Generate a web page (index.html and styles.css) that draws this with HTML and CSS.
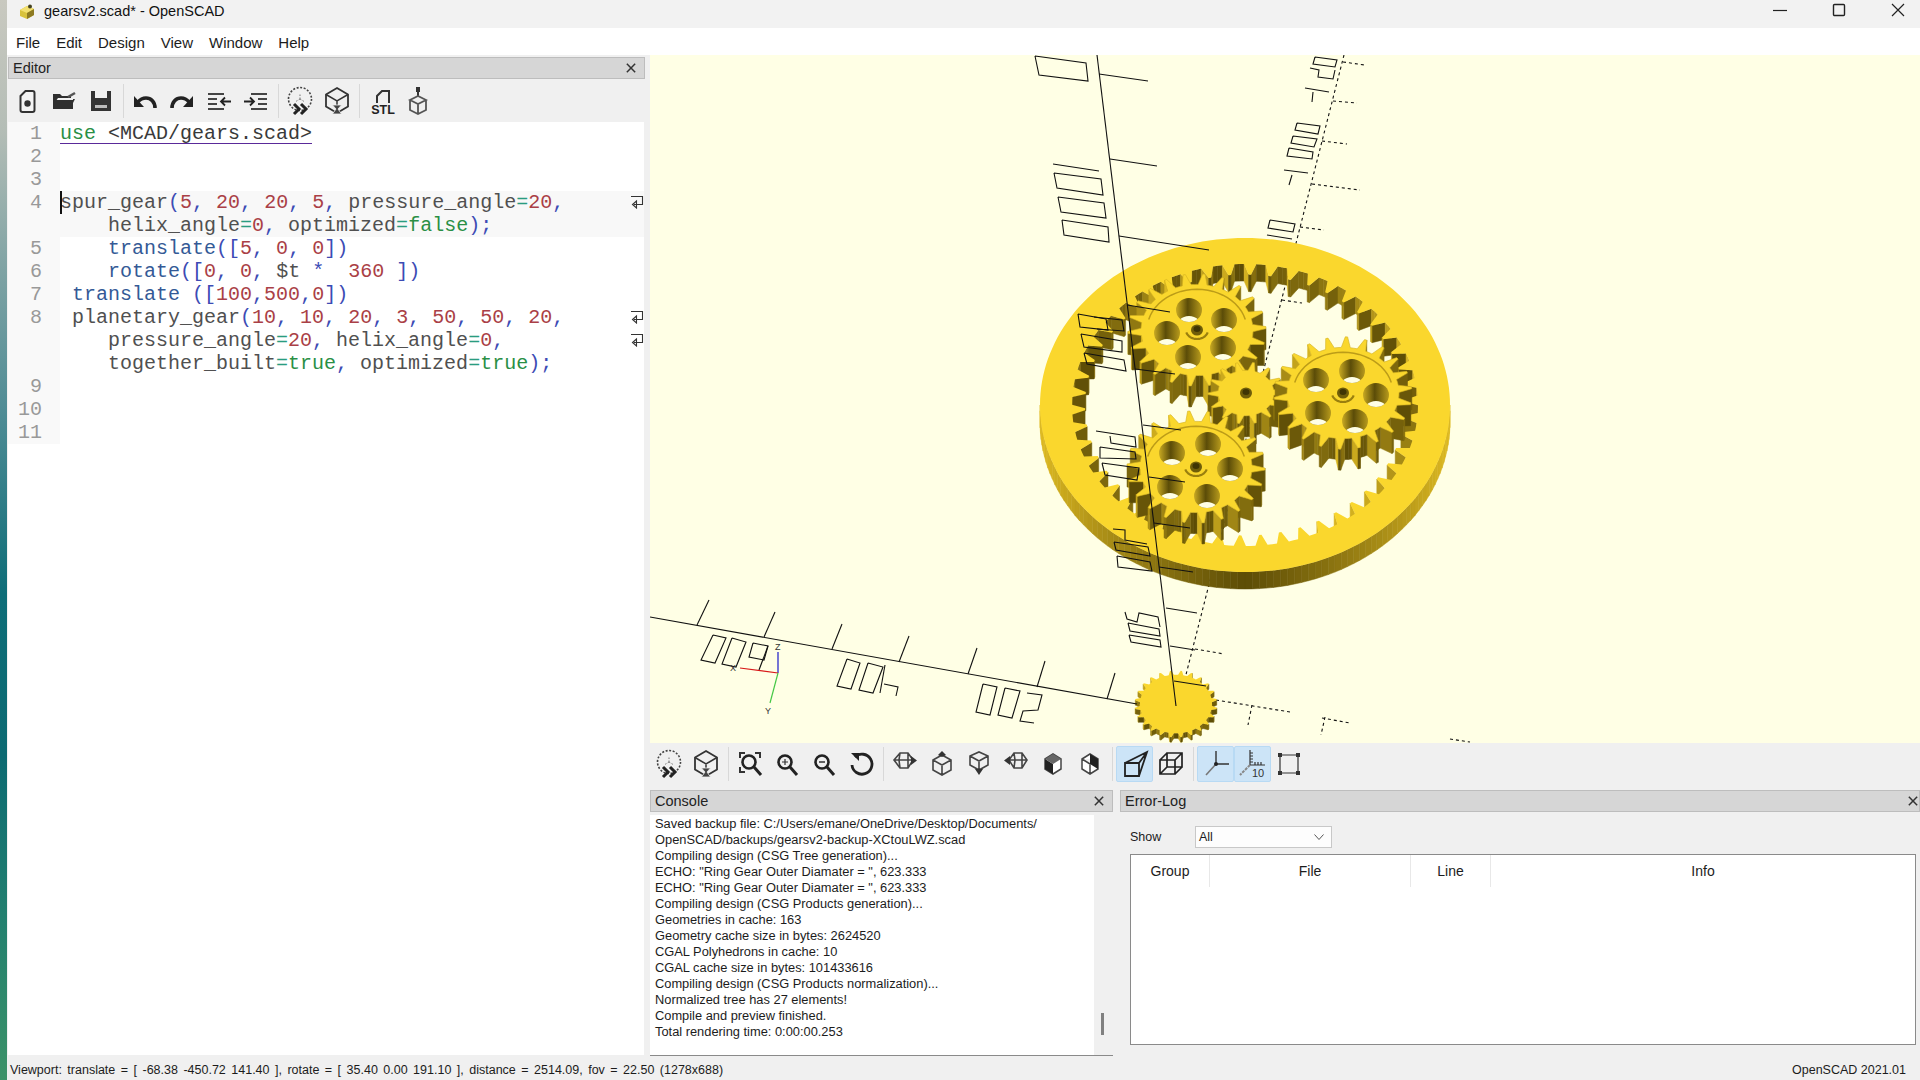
FILE: index.html
```html
<!DOCTYPE html>
<html lang="en">
<head>
<meta charset="utf-8">
<title>gearsv2.scad* - OpenSCAD</title>
<link rel="stylesheet" href="styles.css">
</head>
<body>
<svg class="defs" width="0" height="0" aria-hidden="true">
  <defs>
    <symbol id="i-preview" viewBox="0 0 32 32">
      <circle cx="16" cy="14" r="11.5" fill="none" stroke="#444" stroke-width="1.6" stroke-dasharray="2 1.6"/>
      <path d="M16 14v-5M16 14l-5 3M16 14l5 3" stroke="#777" stroke-width="1" stroke-dasharray="1.5 1.5" fill="none"/>
      <path d="M9 20l5 5-5 5M16 20l5 5-5 5" transform="translate(1 -1)" fill="none" stroke="#222" stroke-width="3"/>
    </symbol>
    <symbol id="i-render" viewBox="0 0 32 32">
      <path d="M16 3l11 6.5v12L16 28 5 21.5v-12z" fill="none" stroke="#333" stroke-width="1.8"/>
      <path d="M5 9.5L16 16l11-6.5M16 16v4" fill="none" stroke="#333" stroke-width="1.5"/>
      <path d="M11.500 20h9l-3.500 4 3.500 5h-9l3.500-5z" fill="#444" stroke="#f0f0f0" stroke-width=".8"/>
    </symbol>
    <symbol id="i-win" viewBox="0 0 12 12"><path d="M1 1l10 10M11 1L1 11" fill="none" stroke="#333" stroke-width="1.800"/></symbol>
    <symbol id="i-wrap" viewBox="0 0 14 14">
      <path d="M1 1.500h11.500v8H4M6.500 6L2.500 9.500l4 3.500V6z" fill="none" stroke="#333" stroke-width="1.100"/>
    </symbol>
  </defs>
</svg>
<div class="desktop-strip"></div>
<div class="window">
  <header class="titlebar">
    <svg class="app-icon" width="18" height="16" viewBox="0 0 18 16"><path d="M2 6l7-4 7 3v6l-7 4-7-3z" fill="#d8c23c"/><path d="M9 2l7 3-7 4-7-3z" fill="#f2e070"/><path d="M9 9l7-4v6l-7 4z" fill="#8d7a22"/><circle cx="12" cy="2.500" r="2" fill="#45421f"/></svg>
    <span class="title-text">gearsv2.scad* - OpenSCAD</span>
    <div class="win-buttons">
      <span class="win-btn"><svg width="14" height="14" viewBox="0 0 14 14"><path d="M0 7.500h14" stroke="#222" stroke-width="1.200"/></svg></span>
      <span class="win-btn"><svg width="14" height="14" viewBox="0 0 14 14"><rect x="1.500" y="1.500" width="11" height="11" rx="1" fill="none" stroke="#222" stroke-width="1.400"/></svg></span>
      <span class="win-btn"><svg width="14" height="14" viewBox="0 0 14 14"><path d="M1 1l12 12M13 1L1 13" stroke="#222" stroke-width="1.200"/></svg></span>
    </div>
  </header>
  <nav class="menubar">
    <span>File</span><span>Edit</span><span>Design</span><span>View</span><span>Window</span><span>Help</span>
  </nav>
  <main class="main">
    <section class="editor-dock">
      <div class="dock-head"><span>Editor</span><svg class="dock-close"><use href="#i-win"/></svg></div>
      <div class="toolbar editor-tools">
        <span class="tb"><svg width="32" height="32" viewBox="0 0 32 32"><path d="M9.500 11l5-5h7q2 0 2 2v17q0 2-2 2h-10q-2 0-2-2z" fill="#f4f4f4" stroke="#333" stroke-width="2"/><circle cx="16.500" cy="18.500" r="3.200" fill="#333"/></svg></span>
        <span class="tb"><svg width="32" height="32" viewBox="0 0 32 32"><path d="M5 9h7l2 2h9v2H10l-5 7zM5 15h20v9H5z" fill="#2f2f2f"/><path d="M20 12l7-4" stroke="#555" stroke-width="2.500"/><path d="M25 14v4l2-4z" fill="#333"/></svg></span>
        <span class="tb"><svg width="32" height="32" viewBox="0 0 32 32"><path d="M6 6h4v7h12V6h4v20H6z" fill="#333"/><path d="M10 20h12v3H10z" fill="#bbb"/></svg></span>
        <i class="sep"></i>
        <span class="tb"><svg width="32" height="32" viewBox="0 0 32 32"><path d="M26 23c0-6-4-10-9-10-3 0-6 1.500-8 4" fill="none" stroke="#222" stroke-width="3.600"/><path d="M5 11v11h10z" fill="#222"/></svg></span>
        <span class="tb"><svg width="32" height="32" viewBox="0 0 32 32"><path d="M6 23c0-6 4-10 9-10 3 0 6 1.500 8 4" fill="none" stroke="#222" stroke-width="3.600"/><path d="M27 11v11H17z" fill="#222"/></svg></span>
        <span class="tb"><svg width="32" height="32" viewBox="0 0 32 32"><path d="M5 9h16M5 14h9M5 19h9M5 24h16" stroke="#444" stroke-width="1.800"/><path d="M28 16.500H18M22 12.500l-4 4 4 4" fill="none" stroke="#222" stroke-width="1.800"/></svg></span>
        <span class="tb"><svg width="32" height="32" viewBox="0 0 32 32"><path d="M11 9h16M18 14h9M18 19h9M11 24h16" stroke="#444" stroke-width="1.800"/><path d="M4 16.500h10M10 12.500l4 4-4 4" fill="none" stroke="#222" stroke-width="1.800"/></svg></span>
        <i class="sep"></i>
        <span class="tb"><svg width="32" height="32"><use href="#i-preview"/></svg></span>
        <span class="tb"><svg width="32" height="32"><use href="#i-render"/></svg></span>
        <i class="sep"></i>
        <span class="tb"><svg class="nudge" width="32" height="32" viewBox="0 0 32 32"><path d="M10 18v-7l5-5h7v12" fill="none" stroke="#333" stroke-width="2"/><text class="stl" x="16" y="29">STL</text></svg></span>
        <span class="tb"><svg width="32" height="32" viewBox="0 0 32 32"><path d="M14 2h4v5h-1v5h-2V7h-1z" fill="#333"/><path d="M8 15l8 4 8-4-8-4zM8 15v10l8 4 8-4V15M16 19v10" fill="none" stroke="#555" stroke-width="1.800"/></svg></span>
      </div>
      <div class="code-area">
        <div class="row"><span class="ln">1</span><span class="code"><span class="incl"><span class="kw">use</span> &lt;MCAD/gears.scad&gt;</span></span></div>
        <div class="row"><span class="ln">2</span><span class="code"></span></div>
        <div class="row"><span class="ln">3</span><span class="code"></span></div>
        <div class="row"><span class="ln">4</span><span class="code cur"><i class="caret"></i>spur_gear<b>(</b><em>5</em><b>,</b> <em>20</em><b>,</b> <em>20</em><b>,</b> <em>5</em><b>,</b> pressure_angle<u>=</u><em>20</em><b>,</b><svg class="wrap-mark"><use href="#i-wrap"/></svg></span></div>
        <div class="row"><span class="ln"></span><span class="code cur">    helix_angle<u>=</u><em>0</em><b>,</b> optimized<u>=</u><span class="kw">false</span><b>);</b></span></div>
        <div class="row"><span class="ln">5</span><span class="code">    <span class="fn">translate</span><b>([</b><em>5</em><b>,</b> <em>0</em><b>,</b> <em>0</em><b>])</b></span></div>
        <div class="row"><span class="ln">6</span><span class="code">    <span class="fn">rotate</span><b>([</b><em>0</em><b>,</b> <em>0</em><b>,</b> $t <b>*</b>  <em>360</em> <b>])</b></span></div>
        <div class="row"><span class="ln">7</span><span class="code"> <span class="fn">translate</span> <b>([</b><em>100</em><b>,</b><em>500</em><b>,</b><em>0</em><b>])</b></span></div>
        <div class="row"><span class="ln">8</span><span class="code"> planetary_gear<b>(</b><em>10</em><b>,</b> <em>10</em><b>,</b> <em>20</em><b>,</b> <em>3</em><b>,</b> <em>50</em><b>,</b> <em>50</em><b>,</b> <em>20</em><b>,</b><svg class="wrap-mark"><use href="#i-wrap"/></svg></span></div>
        <div class="row"><span class="ln"></span><span class="code">    pressure_angle<u>=</u><em>20</em><b>,</b> helix_angle<u>=</u><em>0</em><b>,</b><svg class="wrap-mark"><use href="#i-wrap"/></svg></span></div>
        <div class="row"><span class="ln"></span><span class="code">    together_built<u>=</u><span class="kw">true</span><b>,</b> optimized<u>=</u><span class="kw">true</span><b>);</b></span></div>
        <div class="row"><span class="ln">9</span><span class="code"></span></div>
        <div class="row"><span class="ln">10</span><span class="code"></span></div>
        <div class="row"><span class="ln">11</span><span class="code"></span></div>
      </div>
    </section>
    <section class="right">
      <div class="viewport">
        <svg id="scene" class="scene" width="1270" height="688" viewBox="650 55 1270 688">
          <defs>
            <linearGradient id="holeFill" x1="0" x2="1" y1="0" y2="0">
              <stop offset="0" stop-color="#c9aa22"/><stop offset=".45" stop-color="#5b4c08"/><stop offset="1" stop-color="#b79a1c"/>
            </linearGradient>
          </defs>
          <g id="back"></g>
          <g id="model"></g>
          <g id="front"></g>
          <g class="gizmo">
            <path d="M778 673V652" stroke="#1a1ac8"/>
            <path d="M778 673L740 668" stroke="#d81818"/>
            <path d="M778 673L770 703" stroke="#46c846"/>
            <text x="775" y="650">Z</text>
            <text x="730" y="671">X</text>
            <text x="765" y="714">Y</text>
          </g>
        </svg>
      </div>
      <div class="toolbar view-tools">
        <span class="tb"><svg width="32" height="32"><use href="#i-preview"/></svg></span>
        <span class="tb"><svg width="32" height="32"><use href="#i-render"/></svg></span>
        <i class="sep"></i>
        <span class="tb"><svg width="32" height="32" viewBox="0 0 32 32"><path d="M6 10V5h5M21 5h5v5M6 19v5h5" fill="none" stroke="#333" stroke-width="2"/><circle cx="15" cy="14" r="6.500" fill="none" stroke="#222" stroke-width="2.600"/><path d="M20 19l7 8" stroke="#222" stroke-width="3"/></svg></span>
        <span class="tb"><svg width="32" height="32" viewBox="0 0 32 32"><circle cx="14" cy="14" r="6.500" fill="none" stroke="#222" stroke-width="2.600"/><path d="M11 14h6M14 11v6" stroke="#333" stroke-width="1.200"/><path d="M19 19l7 8" stroke="#222" stroke-width="3"/></svg></span>
        <span class="tb"><svg width="32" height="32" viewBox="0 0 32 32"><circle cx="14" cy="14" r="6.500" fill="none" stroke="#222" stroke-width="2.600"/><path d="M11 14h6" stroke="#333" stroke-width="1.500"/><path d="M19 19l7 8" stroke="#222" stroke-width="3"/></svg></span>
        <span class="tb"><svg width="32" height="32" viewBox="0 0 32 32"><path d="M10 9a10 10 0 1 1-3 8" fill="none" stroke="#222" stroke-width="2.800"/><path d="M6 5h8v8z" fill="#222"/></svg></span>
        <i class="sep"></i>
        <span class="tb"><svg width="32" height="32" viewBox="0 0 32 32"><path d="M5 12l6-7h8l5 7-5 8h-8l-6-8zM5 12h14l5 0M11 5l-1 7 1 8M19 5v15" fill="none" stroke="#444" stroke-width="1.600"/><path d="M22 8l6 4.500-6 4.500z" fill="#333"/></svg></span>
        <span class="tb"><svg width="32" height="32" viewBox="0 0 32 32"><path d="M7 12l9-5 9 5v10l-9 5-9-5zM7 12l9 5 9-5M16 17v10" fill="none" stroke="#444" stroke-width="1.600"/><path d="M12 7l4-4 4 4-4 2z" fill="#333"/></svg></span>
        <span class="tb"><svg width="32" height="32" viewBox="0 0 32 32"><path d="M7 8l9-4 9 4v9l-9 5-9-5zM7 8l9 5 9-5M16 13v9" fill="none" stroke="#444" stroke-width="1.600"/><path d="M12 21l8 0-4 6z" fill="#333"/></svg></span>
        <span class="tb"><svg width="32" height="32" viewBox="0 0 32 32"><path d="M9 12l5-7h8l5 7-5 8h-8zM9 12h13l5 0M22 5v15M14 5l1 7-1 8" fill="none" stroke="#444" stroke-width="1.600"/><path d="M10 8l-6 4.500 6 4.500z" fill="#333"/></svg></span>
        <span class="tb"><svg width="32" height="32" viewBox="0 0 32 32"><path d="M8 11l8-5 8 5v10l-8 5-8-5z" fill="#fff" stroke="#444" stroke-width="1.500"/><path d="M8 11l8 5v10l-8-5z" fill="#222"/><path d="M8 11l8-5 8 5-8 5z" fill="#666"/></svg></span>
        <span class="tb"><svg width="32" height="32" viewBox="0 0 32 32"><path d="M8 11l8-5 8 5v10l-8 5-8-5zM8 11l8 5 8-5M16 16v10" fill="#fff" stroke="#444" stroke-width="1.500"/><path d="M16 6l8 5v10l-8-5z" fill="#222"/></svg></span>
        <i class="sep"></i>
        <span class="tb active"><svg class="nudge" width="32" height="32" viewBox="0 0 32 32"><path d="M5 15h14v13H5zM5 15L27 4 19 28M19 15L27 4" fill="none" stroke="#222" stroke-width="1.800"/></svg></span>
        <span class="tb"><svg width="32" height="32" viewBox="0 0 32 32"><path d="M5 12h15v14H5zM12 5h15v14H12zM5 12l7-7M20 12l7-7M5 26l7-7M20 26l7-7" fill="none" stroke="#222" stroke-width="1.700"/></svg></span>
        <i class="sep"></i>
        <span class="tb active"><svg class="nudge" width="32" height="32" viewBox="0 0 32 32"><path d="M15 3v13h13" fill="none" stroke="#333" stroke-width="1.400"/><path d="M15 16L5 27" stroke="#777" stroke-width="1.600"/><circle cx="15" cy="16" r="2" fill="#222"/></svg></span>
        <span class="tb active"><svg width="32" height="32" viewBox="0 0 32 32"><path d="M14 2v15h15M14 5h3M14 8h3M14 11h3M14 14h3M19 14v3M22 14v3M25 14v3" fill="none" stroke="#333" stroke-width="1.200"/><path d="M14 17L4 27" stroke="#888" stroke-width="2" stroke-dasharray="3 1"/><text class="ten" x="16" y="29">10</text></svg></span>
        <span class="tb"><svg width="32" height="32" viewBox="0 0 32 32"><path d="M7 7h18v18H7z" fill="none" stroke="#333" stroke-width="1.200"/><path d="M5 5h4v4H5zM23 5h4v4h-4zM5 23h4v4H5zM23 23h4v4h-4z" fill="#333"/></svg></span>
      </div>
      <div class="bottom-docks">
        <section class="console">
          <div class="dock-head"><span>Console</span><svg class="dock-close"><use href="#i-win"/></svg></div>
          <div class="console-body">
            <div class="console-text">
              <p>Saved backup file: C:/Users/emane/OneDrive/Desktop/Documents/</p>
              <p>OpenSCAD/backups/gearsv2-backup-XCtouLWZ.scad</p>
              <p>Compiling design (CSG Tree generation)...</p>
              <p>ECHO: "Ring Gear Outer Diamater = ", 623.333</p>
              <p>ECHO: "Ring Gear Outer Diamater = ", 623.333</p>
              <p>Compiling design (CSG Products generation)...</p>
              <p>Geometries in cache: 163</p>
              <p>Geometry cache size in bytes: 2624520</p>
              <p>CGAL Polyhedrons in cache: 10</p>
              <p>CGAL cache size in bytes: 101433616</p>
              <p>Compiling design (CSG Products normalization)...</p>
              <p>Normalized tree has 27 elements!</p>
              <p>Compile and preview finished.</p>
              <p>Total rendering time: 0:00:00.253</p>
            </div>
            <div class="scrolltrack"><i class="thumb"></i></div>
          </div>
        </section>
        <section class="errorlog">
          <div class="dock-head"><span>Error-Log</span><svg class="dock-close"><use href="#i-win"/></svg></div>
          <div class="filter"><span class="show-label">Show</span><span class="combo">All<svg width="12" height="8" viewBox="0 0 12 8"><path d="M1.500 1.500L6 6.500l4.500-5" fill="none" stroke="#555"/></svg></span></div>
          <div class="log-table">
            <div class="log-head"><span>Group</span><span>File</span><span>Line</span><span>Info</span></div>
          </div>
        </section>
      </div>
    </section>
  </main>
  <footer class="statusbar">
    <span class="status-left">Viewport: translate = [ -68.38 -450.72 141.40 ], rotate = [ 35.40 0.00 191.10 ], distance = 2514.09, fov = 22.50 (1278x688)</span>
    <span>OpenSCAD 2021.01</span>
  </footer>
</div>
<script src="gears.js"></script>
</body>
</html>
```
FILE: styles.css
```css
* { box-sizing: border-box; }
html, body { margin: 0; height: 100%; }
body {
  width: 1920px; height: 1080px; overflow: hidden; display: flex;
  font-family: "Liberation Sans", Arial, sans-serif; font-size: 12px; color: #1c1c1c; background: #f0f0f0;
}
.defs { position: absolute; }
.desktop-strip {
  width: 7px; flex: none;
  background: linear-gradient(180deg, #c9c9c0 0, #b4bdb6 12%, #7fa3a4 25%, #4f8c95 38%, #0e6d78 55%, #0c6a72 70%, #23806f 85%, #3c9268 100%);
}
.window { flex: 1; display: flex; flex-direction: column; min-width: 0; background: #f0f0f0; }

.titlebar { height: 28px; display: flex; align-items: center; background: #f2f2f2; padding-left: 11px; flex: none; }
.app-icon { margin-right: 8px; margin-top: -4px; }
.title-text { font-size: 14.500px; margin-top: -6px; color: #111; }
.win-buttons { margin-left: auto; display: flex; gap: 15px; margin-top: -8px; }
.win-btn { width: 44px; display: flex; justify-content: center; }

.menubar { height: 27px; display: flex; align-items: center; background: #fff; padding: 1px 0 0 9px; gap: 16px; font-size: 15px; flex: none; }

.main { flex: 1; display: flex; min-height: 0; }
.editor-dock { width: 638px; flex: none; display: flex; flex-direction: column; padding: 2px 0 5px 1px; }
.dock-head {
  height: 22px; flex: none; display: flex; align-items: center; justify-content: space-between;
  background: #d6d6d6; border: 1px solid #bdbdbd; padding: 0 8px 0 4px; font-size: 14.500px; color: #222;
}
.errorlog .dock-head { padding-right: 1px; }
.dock-close { width: 10px; height: 10px; }

.toolbar { height: 43px; flex: none; display: flex; align-items: center; background: #f0f0f0; }
.editor-tools { padding-left: 0.500px; }
.tb { width: 37px; height: 36px; display: flex; align-items: center; justify-content: center; border-radius: 2px; flex: none; }
.tb.active { background: #cce4f7; border: 1px solid #b8daf4; }
.nudge { margin-left: 3px; }
.sep { width: 1px; height: 34px; margin: 0 3px; background: #d8d8d8; flex: none; }
.stl { font: 700 12.500px "Liberation Sans", Arial, sans-serif; text-anchor: middle; fill: #222; }
.ten { font: 400 11px "Liberation Sans", Arial, sans-serif; fill: #333; }

.code-area { flex: 1; background: #fff; font: 20px/23px "Liberation Mono", "Courier New", monospace; color: #505050; min-height: 0; width: 636px; }
.row { display: flex; height: 23px; }
.ln { width: 52px; flex: none; background: #f9f9f9; color: #999; padding-right: 18px; text-align: right; }
.code { flex: 1; position: relative; white-space: pre; }
.code.cur { background: #f8f8f8; }
.caret { position: absolute; left: 0; top: 0; width: 2px; height: 23px; background: #111; }
.kw { color: #2a8f45; }
.fn { color: #345a96; }
.code b { font-weight: 400; color: #3c4bb4; }
.code em { font-style: normal; color: #aa3f46; }
.code u { text-decoration: none; color: #2a9c80; }
.incl { color: #3a3a3a; border-bottom: 1px solid #5a2a9a; display: inline-block; height: 21px; line-height: 22px; }
.wrap-mark { position: absolute; right: 0; top: 4px; width: 14px; height: 14px; }

.right { flex: 1; display: flex; flex-direction: column; margin-left: 5px; min-width: 0; }
.viewport { height: 688px; flex: none; background: #ffffe5; overflow: hidden; }
.scene { display: block; }
.gizmo path { stroke-width: 1.200; fill: none; }
.gizmo text { font: 9px "Liberation Sans", Arial, sans-serif; fill: #333; }
.view-tools { height: 42px; padding-left: 0.500px; }

.bottom-docks { flex: 1; display: flex; gap: 7px; padding-top: 5px; min-height: 0; }
.console { width: 463px; flex: none; display: flex; flex-direction: column; padding-bottom: 4px; }
.console-body { flex: 1; display: flex; background: #f0f0f0; border-bottom: 1px solid #8a8a8a; margin-top: 3px; min-height: 0; }
.console-text { width: 444px; flex: none; background: #fff; padding: 1px 0 0 5px; }
.console-text p { margin: 0; height: 16px; line-height: 16px; white-space: nowrap; font-size: 12.850px; }
.scrolltrack { flex: 1; position: relative; }
.thumb { position: absolute; left: 7px; bottom: 20px; width: 3px; height: 22px; background: #808080; }

.errorlog { flex: 1; display: flex; flex-direction: column; min-width: 0; }
.filter { height: 42px; display: flex; align-items: center; padding: 7px 0 0 10px; font-size: 12.500px; flex: none; }
.show-label { width: 65px; }
.combo { width: 137px; height: 22px; background: #fdfdfd; border: 1px solid #c8c8c8; display: flex; align-items: center; justify-content: space-between; padding: 0 6px 0 3px; }
.log-table { height: 191px; margin: 0 4px 0 10px; background: #fff; border: 1px solid #8a8a8a; flex: none; }
.log-head { display: grid; grid-template-columns: 79px 201px 80px 1fr; height: 32px; font-size: 14px; }
.log-head span { display: flex; align-items: center; justify-content: center; border-right: 1px solid #e8e8e8; }
.log-head span:last-child { border-right: 0; }

.statusbar { height: 20px; flex: none; display: flex; justify-content: space-between; align-items: center; padding: 0 14px 0 3px; font-size: 12.500px; background: #f0f0f0; }
.status-left { word-spacing: 2px; }
```
FILE: gears.js
```js
(function () {
  var NS = 'http://www.w3.org/2000/svg';
  var K = 0.815;
  var TOP = '#fad72d';
  var model = document.getElementById('model');

  function el(name, attrs, parent) {
    var e = document.createElementNS(NS, name);
    for (var k in attrs) e.setAttribute(k, attrs[k]);
    (parent || model).appendChild(e);
    return e;
  }
  function d(pts) {
    return 'M' + pts.map(function (p) { return p[0].toFixed(1) + ' ' + p[1].toFixed(1); }).join('L') + 'Z';
  }
  function lines(list, cls, parent) {
    list.forEach(function (pts) {
      el('polyline', {
        points: pts.map(function (p) { return p.join(','); }).join(' '),
        fill: 'none', stroke: '#111', 'stroke-width': 1.1,
        'stroke-dasharray': cls === 'dash' ? '3 3' : 'none'
      }, parent);
    });
  }
  function gearPts(cx, cy, n, rt, rr, phase) {
    var out = [], fr = [[0, rr], [0.22, rr], [0.44, rt], [0.56, rt], [0.78, rr]];
    for (var i = 0; i < n; i++) {
      fr.forEach(function (f) {
        var a = phase + (i + f[0]) * 2 * Math.PI / n;
        out.push([cx + f[1] * Math.cos(a), cy + f[1] * K * Math.sin(a)]);
      });
    }
    return out;
  }
  function mix(a, b, t) {
    var r = [0, 1, 2].map(function (i) { return Math.round(a[i] + (b[i] - a[i]) * t); });
    return 'rgb(' + r.join(',') + ')';
  }
  var DARK = [92, 76, 6], LIGHT = [222, 186, 34];

  function walls(pts, h, inward, cx, cy, signed) {
    var quads = [];
    for (var i = 0; i < pts.length; i++) {
      var a = pts[i], b = pts[(i + 1) % pts.length];
      var dx = b[0] - a[0], dy = b[1] - a[1], len = Math.hypot(dx, dy) || 1;
      var nx = dy / len, ny = -dx / len;
      var mx = (a[0] + b[0]) / 2 - cx, my = (a[1] + b[1]) / 2 - cy;
      if ((nx * mx + ny * my > 0) === !!inward) { nx = -nx; ny = -ny; }
      if (ny <= 0) continue;
      var t = Math.abs(nx);
      if (signed) t = nx > 0 ? t * 0.35 : t * 1.0;
      quads.push({ y: Math.min(a[1], b[1]), pts: [a, b, [b[0], b[1] + h], [a[0], a[1] + h]], c: mix(DARK, LIGHT, t) });
    }
    quads.sort(function (p, q) { return p.y - q.y; });
    quads.forEach(function (q) {
      el('path', { d: d(q.pts), fill: q.c, stroke: q.c, 'stroke-width': 0.5 });
    });
  }
  function ellipseArc(cx, cy, r, a0, a1) {
    var p = [];
    for (var i = 0; i <= 24; i++) {
      var a = (a0 + (a1 - a0) * i / 24) * Math.PI / 180;
      p.push(p.length ? 'L' : 'M');
      p.push((cx + r * Math.cos(a)).toFixed(1) + ' ' + (cy + r * K * Math.sin(a)).toFixed(1));
    }
    return p.join('');
  }

  /* ring */
  var RC = [1245, 405];
  var outer = [];
  for (var i = 0; i < 180; i++) {
    var a = i * 2 * Math.PI / 180;
    outer.push([RC[0] + 205 * Math.cos(a), RC[1] + 167 * Math.sin(a)]);
  }
  var hole = gearPts(RC[0], RC[1], 50, 160, 173, 0.03);
  walls(outer, 17, false, RC[0], RC[1], false);
  walls(hole, 17, true, RC[0], RC[1], true);
  el('path', { d: d(outer) + d(hole), fill: TOP, 'fill-rule': 'evenodd' });

  var clipId = 0;
  function bore(x, y, rx, ry, depth) {
    var id = 'b' + (clipId++);
    var c = el('clipPath', { id: id });
    el('ellipse', { cx: x, cy: y, rx: rx, ry: ry }, c);
    el('ellipse', { cx: x, cy: y, rx: rx, ry: ry, fill: 'url(#holeFill)' });
    el('ellipse', { cx: x, cy: y + depth, rx: rx, ry: ry, fill: '#ffffe5', 'clip-path': 'url(#' + id + ')' });
  }
  function gear(g) {
    var pts = gearPts(g.x, g.y, g.n, g.rt, g.rr, g.ph);
    walls(pts, g.h, false, g.x, g.y, true);
    el('path', { d: d(pts), fill: TOP, stroke: '#d2b020', 'stroke-width': 0.6 });
    (g.holes || []).forEach(function (h) {
      bore(g.x + h[0], g.y + h[1], 13, 12, 18);
    });
    if (g.holes) {
      el('path', { d: ellipseArc(g.x, g.y, 50, 195, 345), fill: 'none', stroke: '#bc9c18', 'stroke-width': 1.5 });
      el('path', { d: ellipseArc(g.x, g.y, 11, 15, 165), fill: 'none', stroke: '#9a7f0e', 'stroke-width': 2.2 });
    }
    el('ellipse', { cx: g.x, cy: g.y, rx: 6, ry: 5.5, fill: '#6f5d09' });
    el('ellipse', { cx: g.x, cy: g.y - 1, rx: 3.5, ry: 3, fill: '#3f3504' });
  }
  var PL = { n: 22, rt: 69, rr: 56, h: 21 };
  [
    { x: 1197, y: 330, ph: 0.1, holes: [[-8, -20], [27, -10], [-30, 3], [26, 18], [-9, 27]] },
    { x: 1246, y: 393, n: 14, rt: 38, rr: 28, h: 21, ph: 0.2 },
    { x: 1343, y: 393, ph: 0.05, holes: [[-27, -13], [9, -22], [33, 2], [12, 28], [-25, 20]] },
    { x: 1196, y: 467, ph: 0.18, holes: [[-24, -14], [12, -23], [34, 2], [11, 29], [-26, 20]] }
  ].forEach(function (g) {
    gear({ x: g.x, y: g.y, n: g.n || PL.n, rt: g.rt || PL.rt, rr: g.rr || PL.rr, h: g.h || PL.h, ph: g.ph, holes: g.holes });
  });

  /* small gear at the origin */
  var small = gearPts(1176, 704, 24, 41, 36, 0);
  walls(small, 5, false, 1176, 704, true);
  el('path', { d: d(small), fill: TOP });

  /* axes and scale marks */
  var back = document.getElementById('back');
  var front = document.getElementById('front');
  lines([
    [[1344, 55], [1178, 706]],
    [[1343, 62], [1365, 65]], [[1333, 101], [1357, 103]], [[1322, 141], [1347, 144]],
    [[1312, 184], [1360, 190]], [[1300, 227], [1324, 230]], [[1282, 300], [1302, 303]],
    [[1195, 649], [1224, 654]],
    [[1216, 700], [1290, 712]], [[1322, 718], [1350, 723]], [[1450, 739], [1470, 742]],
    [[1252, 705], [1248, 725]], [[1325, 717], [1321, 735]]
  ], 'dash', back);
  lines([
    [[1035, 56], [1086, 63], [1088, 81], [1039, 75], [1035, 56]],
    [[1053, 164], [1099, 171]],
    [[1054, 173], [1101, 179], [1103, 195], [1057, 188], [1054, 173]],
    [[1058, 197], [1104, 203], [1106, 218], [1061, 212], [1058, 197]],
    [[1062, 220], [1108, 227], [1109, 242], [1064, 235], [1062, 220]],
    [[1315, 57], [1337, 60], [1335, 67], [1313, 64], [1315, 57]],
    [[1310, 68], [1319, 70], [1318, 77], [1333, 79], [1335, 70]],
    [[1305, 88], [1329, 92]], [[1313, 92], [1312, 102]],
    [[1297, 123], [1320, 126], [1318, 134], [1295, 130], [1297, 123]],
    [[1293, 136], [1317, 139], [1314, 147], [1291, 143], [1293, 136]],
    [[1289, 148], [1313, 152], [1312, 159], [1287, 156], [1289, 148]],
    [[1284, 170], [1308, 173]], [[1292, 175], [1289, 185]],
    [[1270, 220], [1295, 224], [1293, 232], [1268, 228], [1270, 220]],
    [[1267, 235], [1292, 239]]
  ], 'solid', back);
  lines([
    [[1097, 55], [1176, 706]],
    [[1099, 74], [1148, 81]], [[1110, 159], [1157, 166]], [[1119, 236], [1209, 250]],
    [[1127, 305], [1170, 312]], [[1135, 369], [1175, 374]], [[1143, 425], [1181, 430]],
    [[1149, 477], [1185, 482]], [[1154, 523], [1190, 528]], [[1159, 567], [1193, 572]],
    [[1166, 608], [1197, 613]], [[1170, 646], [1195, 650]], [[1174, 681], [1206, 686]],
    [[650, 617], [1137, 704]],
    [[697, 625], [709, 600]], [[764, 637], [775, 612]], [[832, 649], [842, 624]],
    [[899, 662], [909, 636]], [[968, 674], [977, 648]], [[1037, 687], [1045, 661]], [[1107, 699], [1115, 673]],
    [[713, 635], [726, 638], [715, 663], [701, 660], [713, 635]],
    [[732, 638], [746, 642], [736, 667], [722, 664], [732, 638]],
    [[753, 643], [768, 646], [764, 660], [749, 657], [753, 643]], [[768, 646], [759, 670]],
    [[847, 659], [860, 663], [851, 689], [837, 686], [847, 659]],
    [[868, 663], [883, 667], [873, 693], [859, 690], [868, 663]],
    [[885, 665], [880, 693]], [[884, 684], [898, 687], [896, 696]],
    [[983, 684], [997, 687], [990, 715], [976, 712], [983, 684]],
    [[1005, 688], [1020, 691], [1012, 718], [998, 715], [1005, 688]],
    [[1027, 693], [1042, 695], [1038, 710], [1023, 711], [1020, 721], [1034, 723]],
    [[1125, 612], [1127, 619], [1137, 622], [1139, 613], [1158, 617], [1160, 627]],
    [[1128, 623], [1159, 629], [1160, 636], [1130, 631], [1128, 623]],
    [[1129, 635], [1160, 640], [1161, 647], [1131, 642], [1129, 635]],
    [[1078, 314], [1106, 319], [1108, 330], [1080, 327], [1078, 314]],
    [[1094, 317], [1122, 320], [1124, 331], [1097, 329]],
    [[1081, 334], [1122, 341], [1122, 352], [1084, 347], [1081, 334]],
    [[1084, 353], [1124, 360], [1126, 371], [1087, 364], [1084, 353]],
    [[1096, 431], [1135, 437], [1136, 447], [1111, 443], [1110, 436]],
    [[1100, 447], [1135, 452], [1136, 459], [1100, 458], [1100, 447]],
    [[1102, 463], [1139, 468], [1137, 480], [1105, 475], [1102, 463]],
    [[1113, 529], [1125, 530], [1125, 540], [1147, 544]],
    [[1114, 542], [1148, 547], [1150, 556], [1116, 550], [1114, 542]],
    [[1117, 556], [1150, 562], [1152, 571], [1118, 567], [1117, 556]]
  ], 'solid', front);
})();
```
